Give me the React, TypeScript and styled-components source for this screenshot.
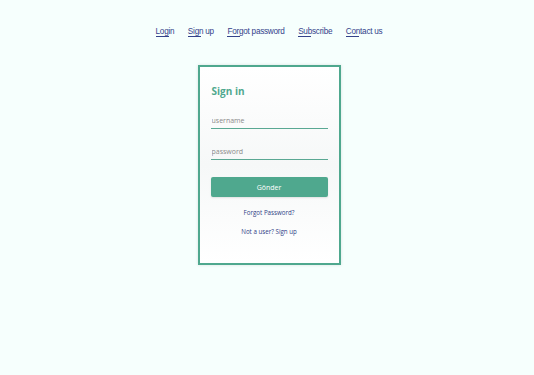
import React from "react";
import styled, { createGlobalStyle } from "styled-components";

const Global = createGlobalStyle`
  html, body { margin: 0; padding: 0; background: #f6fffd; }
  body { font-family: "Open Sans", "Noto Sans", sans-serif; }
  * { box-sizing: border-box; }
`;

const Page = styled.div`
  min-height: 375px;
  display: flex;
  flex-direction: column;
  align-items: center;
  padding-top: 25px;
`;

const Nav = styled.nav`
  display: flex;
  gap: 13.5px;
  font-family: "Liberation Sans", Arial, sans-serif;
  font-size: 8.2px;
  letter-spacing: -0.25px;
  margin-left: 4px;
`;

const NavLink = styled.a`
  position: relative;
  color: #34428a;
  text-decoration: none;
  line-height: 14px;
  &::after {
    content: "";
    position: absolute;
    left: 0;
    bottom: 2px;
    width: 13px;
    height: 1px;
    background: #34428a;
  }
`;

const Card = styled.div`
  margin-top: 26px;
  width: 143px;
  border: 2px solid #4fa88e;
  background: linear-gradient(180deg, #ffffff 0%, #f6f8f8 50%, #ffffff 100%);
  box-shadow: 0 0 3px rgba(0, 0, 0, 0.12);
  padding: 17px 11px 27px;
  display: flex;
  flex-direction: column;
  margin-left: 4px;
`;

const Title = styled.h2`
  margin: 0;
  font-size: 10px;
  font-weight: 700;
  color: #4fa88e;
  line-height: 14px;
  padding-left: 1px;
`;

const Field = styled.input`
  border: none;
  border-bottom: 1px solid #5aa893;
  background: transparent;
  outline: none;
  font-family: "Open Sans", sans-serif;
  font-size: 7px;
  padding: 0 0 3px 1px;
  height: 13px;
  margin-top: ${(p: { $mt: number }) => p.$mt}px;
  color: #555;
  &::placeholder { color: #8a8a8a; }
`;

const Button = styled.button`
  margin-top: 17px;
  height: 20px;
  border: none;
  border-radius: 2px;
  background: #4fa88e;
  color: #ffffff;
  font-family: "Open Sans", sans-serif;
  font-size: 7px;
  box-shadow: 0 1px 2px rgba(0, 0, 0, 0.1);
`;

const SmallLink = styled.a`
  margin-top: ${(p: { $mt: number }) => p.$mt}px;
  text-align: center;
  font-size: 6.2px;
  color: #2f3d85;
  text-decoration: none;
  line-height: 9px;
`;

export default function App() {
  return (
    <>
      <Global />
      <Page>
        <Nav>
          <NavLink href="#">Login</NavLink>
          <NavLink href="#">Sign up</NavLink>
          <NavLink href="#">Forgot password</NavLink>
          <NavLink href="#">Subscribe</NavLink>
          <NavLink href="#">Contact us</NavLink>
        </Nav>
        <Card>
          <Title>Sign in</Title>
          <Field $mt={18} placeholder="username" />
          <Field $mt={18} type="password" placeholder="password" />
          <Button>Gönder</Button>
          <SmallLink $mt={11} href="#">Forgot Password?</SmallLink>
          <SmallLink $mt={10} href="#">Not a user? Sign up</SmallLink>
        </Card>
      </Page>
    </>
  );
}
